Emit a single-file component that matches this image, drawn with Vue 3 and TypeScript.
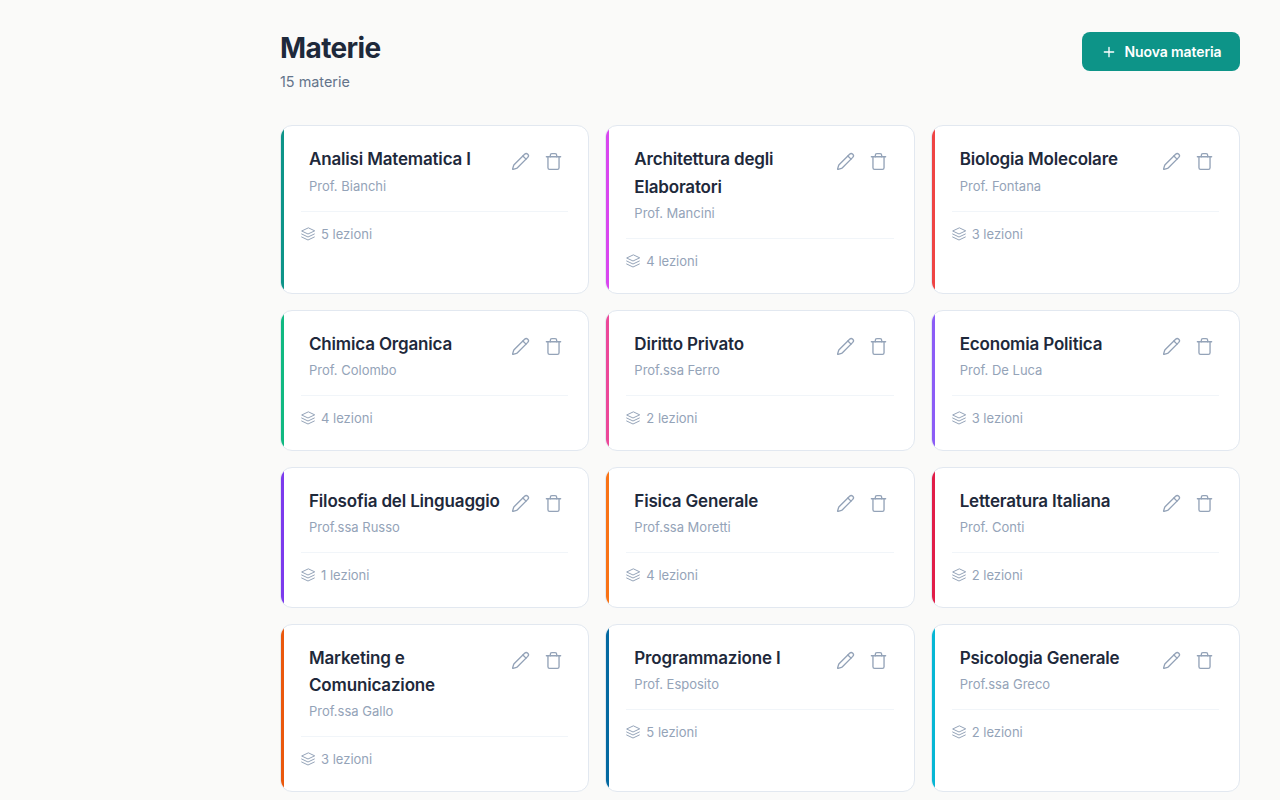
<script setup lang="ts">
interface Subject {
  name: string
  prof: string
  lessons: number
  color: string
}

const subjects: Subject[] = [
  { name: 'Analisi Matematica I', prof: 'Prof. Bianchi', lessons: 5, color: '#0d9488' },
  { name: 'Architettura degli Elaboratori', prof: 'Prof. Mancini', lessons: 4, color: '#d946ef' },
  { name: 'Biologia Molecolare', prof: 'Prof. Fontana', lessons: 3, color: '#ef4444' },
  { name: 'Chimica Organica', prof: 'Prof. Colombo', lessons: 4, color: '#10b981' },
  { name: 'Diritto Privato', prof: 'Prof.ssa Ferro', lessons: 2, color: '#ec4899' },
  { name: 'Economia Politica', prof: 'Prof. De Luca', lessons: 3, color: '#8b5cf6' },
  { name: 'Filosofia del Linguaggio', prof: 'Prof.ssa Russo', lessons: 1, color: '#7c3aed' },
  { name: 'Fisica Generale', prof: 'Prof.ssa Moretti', lessons: 4, color: '#f97316' },
  { name: 'Letteratura Italiana', prof: 'Prof. Conti', lessons: 2, color: '#e11d48' },
  { name: 'Marketing e Comunicazione', prof: 'Prof.ssa Gallo', lessons: 3, color: '#ea580c' },
  { name: 'Programmazione I', prof: 'Prof. Esposito', lessons: 5, color: '#0369a1' },
  { name: 'Psicologia Generale', prof: 'Prof.ssa Greco', lessons: 2, color: '#06b6d4' },
]
</script>

<template>
  <div class="page">
    <main class="main">
      <header class="header">
        <div>
          <h1 class="title">Materie</h1>
          <p class="count">15 materie</p>
        </div>
        <button class="add" type="button">
          <svg class="plus" viewBox="0 0 24 24" fill="none" stroke="currentColor" stroke-width="2" stroke-linecap="round">
            <path d="M5 12h14M12 5v14" />
          </svg>
          Nuova materia
        </button>
      </header>
      <section class="grid">
        <article v-for="s in subjects" :key="s.name" class="card">
          <span class="accent" :style="{ background: s.color }"></span>
          <div class="top">
            <div class="info">
              <h2 class="name">{{ s.name }}</h2>
              <p class="prof">{{ s.prof }}</p>
            </div>
            <div class="actions">
              <svg class="icon" viewBox="0 0 24 24" fill="none" stroke="currentColor" stroke-width="1.7" stroke-linecap="round" stroke-linejoin="round">
                <path d="M21.17 6.81a2.82 2.82 0 0 0-3.99-3.99L3.84 16.17a2 2 0 0 0-.5.83l-1.32 4.35a.5.5 0 0 0 .62.62l4.35-1.32a2 2 0 0 0 .83-.5z" />
                <path d="m15 5 4 4" />
              </svg>
              <svg class="icon" viewBox="0 0 24 24" fill="none" stroke="currentColor" stroke-width="1.7" stroke-linecap="round" stroke-linejoin="round">
                <path d="M3 6h18" />
                <path d="M19 6v14a2 2 0 0 1-2 2H7a2 2 0 0 1-2-2V6" />
                <path d="M8 6V4a2 2 0 0 1 2-2h4a2 2 0 0 1 2 2v2" />
              </svg>
            </div>
          </div>
          <div class="foot">
            <svg class="layers" viewBox="0 0 24 24" fill="none" stroke="currentColor" stroke-width="1.5" stroke-linecap="round" stroke-linejoin="round">
              <path d="M12 3 2.5 7.5 12 12l9.5-4.5z" />
              <path d="m2.5 12 9.5 4.5 9.5-4.5" />
              <path d="m2.5 16.5 9.5 4.5 9.5-4.5" />
            </svg>
            <span>{{ s.lessons }} lezioni</span>
          </div>
        </article>
      </section>
    </main>
  </div>
</template>

<style>
body {
  background: #fafaf9;
}
</style>

<style scoped>
.page {
  font-family: Inter, "Liberation Sans", sans-serif;
  color: #1e293b;
}
.main {
  margin-left: 240px;
  padding: 32px 40px;
}
.header {
  display: flex;
  justify-content: space-between;
  align-items: flex-start;
  margin-bottom: 32.45px;
}
.title {
  margin: 0;
  font-size: 28px;
  font-weight: 700;
  line-height: 32px;
  letter-spacing: -0.6px;
}
.count {
  margin: 7px 0 0;
  font-size: 14.4px;
  line-height: 22px;
  color: #64748b;
}
.add {
  display: flex;
  align-items: center;
  gap: 8px;
  height: 39px;
  width: 158px;
  justify-content: center;
  border: 0;
  border-radius: 8px;
  background: #0d9488;
  color: #fff;
  font: 600 14px Inter, "Liberation Sans", sans-serif;
  letter-spacing: -0.1px;
}
.plus {
  width: 16px;
  height: 16px;
}
.grid {
  display: grid;
  grid-template-columns: repeat(3, 1fr);
  gap: 16px;
}
.card {
  position: relative;
  overflow: hidden;
  padding: 20px;
  background: #fff;
  border: 1px solid #e2e8f0;
  border-radius: 12px;
}
.accent {
  position: absolute;
  left: 0;
  top: 0;
  bottom: 0;
  width: 3px;
}
.top {
  display: flex;
  justify-content: space-between;
  align-items: flex-start;
  gap: 8px;
  padding-left: 8px;
}
.name {
  margin: 0;
  font-size: 17px;
  font-weight: 600;
  line-height: 1.6;
  letter-spacing: -0.17px;
  color: #1e293b;
}
.prof {
  margin: 2px 0 0;
  font-size: 13px;
  line-height: 1.6;
  color: #94a3b8;
}
.actions {
  display: flex;
  gap: 14px;
  flex: none;
  padding: 6px 5.4px 0 0;
  color: #94a3b8;
}
.icon {
  width: 19px;
  height: 19px;
}
.foot {
  display: flex;
  align-items: center;
  gap: 5px;
  margin-top: 14.1px;
  padding-top: 11.4px;
  border-top: 1px solid #f1f5f9;
  min-height: 22.5px;
  font-size: 13px;
  line-height: 1.6;
  color: #94a3b8;
}
.layers {
  width: 16px;
  height: 16px;
  flex: none;
  margin-left: -1px;
}
</style>
